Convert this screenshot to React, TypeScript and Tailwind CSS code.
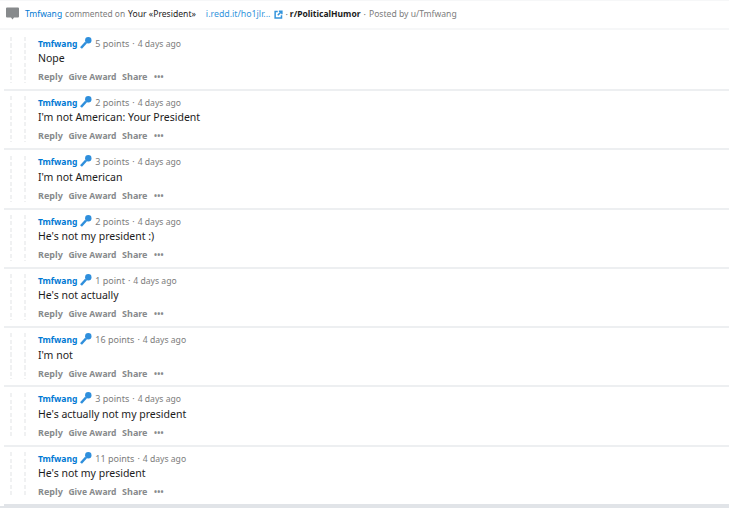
import React from "react";

const rows = [
  { pts: "5 points", text: "Nope" },
  { pts: "2 points", text: "I'm not American: Your President" },
  { pts: "3 points", text: "I'm not American" },
  { pts: "2 points", text: "He's not my president :)" },
  { pts: "1 point", text: "He's not actually" },
  { pts: "16 points", text: "I'm not" },
  { pts: "3 points", text: "He's actually not my president" },
  { pts: "11 points", text: "He's not my president" },
];

function Mic() {
  return (
    <svg width="12" height="12" viewBox="0 0 12 12" className="ml-[3px] shrink-0 -mt-[2px]">
      <path d="M1 11 L6 5.5" stroke="#2f8fdc" strokeWidth="2.6" fill="none" />
      <circle cx="8.3" cy="3.3" r="3.2" fill="#2f8fdc" />
    </svg>
  );
}

function Row({ pts, text, last }: { pts: string; text: string; last: boolean }) {
  return (
    <div className={last ? "h-[59.3px] ml-1 flex border-b-2 border-[#e1e4e8]" : "h-[59.3px] ml-1 flex border-b-2 border-[#edeff1]"}>
      <div className="w-[34px] shrink-0 flex pl-[6px] gap-[12px] pt-[5.3px]">
        <div className="w-[2px] h-[46px] bg-[repeating-linear-gradient(to_bottom,#f0f1f2_0,#f0f1f2_4px,transparent_4px,transparent_6.5px)]" />
        <div className="w-[2px] h-[46px] bg-[repeating-linear-gradient(to_bottom,#f0f1f2_0,#f0f1f2_4px,transparent_4px,transparent_6.5px)]" />
      </div>
      <div className="flex-1 pt-[4px]">
        <div className="flex items-center h-[16px] text-[9px] leading-[16px]">
          <span className="font-bold text-[#0079d3] text-[8.5px]">Tmfwang</span>
          <Mic />
          <span className="ml-[3px] text-[#7c7c7c]">{pts}</span>
          <span className="mx-[3px] text-[#7c7c7c]">·</span>
          <span className="text-[#7c7c7c] text-[8.6px]">4 days ago</span>
        </div>
        <div className="text-[10.5px] leading-[20px] text-[#1c1c1c] -mt-[3.5px]">{text}</div>
        <div className="flex items-center gap-[5.6px] mt-[2px] text-[9px] leading-[14px] font-bold text-[#878a8c]">
          <span>Reply</span>
          <span className="text-[8.5px]">Give Award</span>
          <span>Share</span>
          <span className="ml-[1px] tracking-[0.2px] leading-[10px] text-[8px]">•••</span>
        </div>
      </div>
    </div>
  );
}

export default function App() {
  return (
    <div className="h-[510px] w-[729px] overflow-hidden bg-white font-['Noto_Sans','Open_Sans',sans-serif]">
      <div className="h-[30px] border-t border-b-2 border-[#f6f7f8] flex items-center pl-[6px] text-[9px] text-[#7c7c7c]">
        <svg width="13" height="14" viewBox="0 0 13 14" className="shrink-0 -mt-[1px]">
          <path d="M1 0.5 H12 A1 1 0 0 1 13 1.5 V9.5 A1 1 0 0 1 12 10.5 H8 L6.5 12.5 L5 10.5 H1 A1 1 0 0 1 0 9.5 V1.5 A1 1 0 0 1 1 0.5 Z" fill="#878a8c" />
        </svg>
        <span className="ml-[6px] text-[8.5px] text-[#0079d3]">Tmfwang</span>
        <span className="ml-[3px] text-[8.4px]">commented on</span>
        <span className="ml-[3px] text-[8.6px] text-[#1c1c1c]">Your «President»</span>
        <span className="ml-[10px] text-[8.8px] text-[#3394dc]">i.redd.it/ho1jlr...</span>
        <svg width="9" height="9" viewBox="0 0 24 24" className="ml-[4px]" fill="none" stroke="#3394dc" strokeWidth="4">
          <path d="M10 4H3v17h17v-7" />
          <path d="M13 3h8v8M21 3 10 14" />
        </svg>
        <span className="mx-[2px]">·</span>
        <span className="font-bold text-[8.5px] text-[#1c1c1c]">r/PoliticalHumor</span>
        <span className="mx-[3px]">·</span>
        <span className="text-[8.6px]">Posted by u/Tmfwang</span>
      </div>
      <div className="pt-[1.7px]">
        {rows.map((r, i) => (
          <Row key={i} pts={r.pts} text={r.text} last={i === rows.length - 1} />
        ))}
      </div>
      <div className="h-[2px] bg-[#e1e4e8]" />
    </div>
  );
}
